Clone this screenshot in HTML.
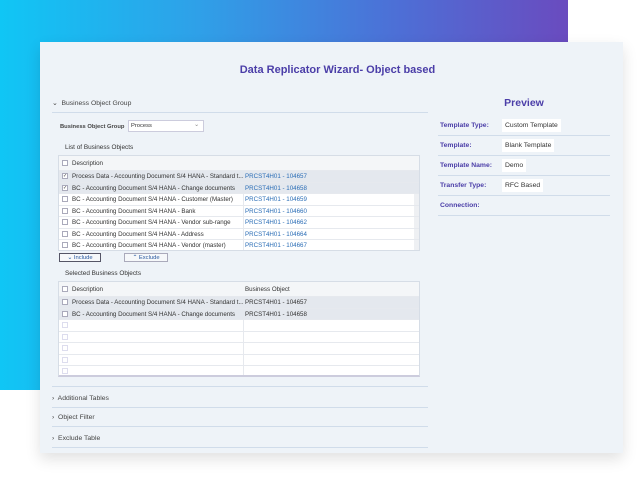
<!DOCTYPE html><html><head><style>
*{margin:0;padding:0;box-sizing:border-box}
body{width:637px;height:489px;background:#fff;position:relative;overflow:hidden;font-family:"Liberation Sans",sans-serif;font-size:6.2px;color:#333}
.bg{position:absolute;left:0;top:0;width:568px;height:390px;background:linear-gradient(90deg,#10c6f5 0%,#2fa0e8 35%,#4d6fd6 70%,#6a4bbf 100%)}
.card{position:absolute;left:40px;top:42px;width:583px;height:411px;background:#eef3f8;box-shadow:0 6px 14px rgba(0,0,0,.12)}
.a{position:absolute}
.title{left:6px;width:583px;text-align:center;top:22px;font-size:11px;font-weight:bold;color:#4b3ea8}
.sec{position:absolute;left:12px;width:376px;border-bottom:1px solid #d0dcea;font-size:6.8px;color:#444;height:14px}
.t{position:absolute;left:18px;width:362px;background:#fff;border:1px solid #d6dde6}
.r{height:11.5px;border-bottom:1px solid #e6e9ee;position:relative;white-space:nowrap}
.r.s{background:#e4e8ee}
.r span{position:absolute;top:2px}
.cb{position:absolute;left:3px;top:2px;width:6px;height:6px;border:1px solid #aab;background:#fff;font-size:5px;line-height:5px}
.c1{left:13px}.c2{left:186px}
.lk{color:#2a6db6}
.col{position:absolute;left:184px;top:0;bottom:0;border-left:1px solid #e6e9ee}
.pv{position:absolute;left:398px;width:172px;height:20px;border-bottom:1px solid #d0dcea}
.pv b{position:absolute;left:2px;top:6px;color:#4b3ea8;font-size:6.8px}
.pv i{position:absolute;left:64px;top:3px;font-style:normal;background:#fff;padding:3px 3px;font-size:6.8px;color:#333}
.btn{position:absolute;border:1px solid #aab;background:#f6f8fa;height:9px;font-size:5.8px;color:#2a5aa0;text-align:center;line-height:8px}
</style></head><body>
<div class="bg"></div>
<div class="card">
<div class="a title">Data Replicator Wizard- Object based</div>
<div class="sec" style="top:57px">⌄&nbsp; Business Object Group</div>
<div class="a" style="left:20px;top:82px;font-size:5.8px;font-weight:bold;color:#444">Business Object Group</div>
<div class="a" style="left:88px;top:78px;width:76px;height:12px;background:#fff;border:1px solid #ccd;font-size:5.8px;padding:2px">Process<span style="position:absolute;right:4px;top:1px;color:#888">⌄</span></div>
<div class="a" style="left:25px;top:102px;font-size:6.4px">List of Business Objects</div>
<div class="t" style="top:113px;height:96px;overflow:hidden">
<div class="col"></div>
<div class="a" style="right:0;top:0;width:5px;height:96px;background:#eef0f3"><div style="width:5px;height:6px;background:#999"></div></div>
<div class="r" style="height:15px;background:#f4f6f8"><div class="cb" style="top:4px"></div><span class="c1" style="top:4px">Description</span></div>
<div class="r s"><div class="cb">✓</div><span class="c1">Process Data - Accounting Document S/4 HANA - Standard t...</span><span class="c2 lk">PRCST4H01 - 104657</span></div>
<div class="r s"><div class="cb">✓</div><span class="c1">BC - Accounting Document S/4 HANA - Change documents</span><span class="c2 lk">PRCST4H01 - 104658</span></div>
<div class="r"><div class="cb"></div><span class="c1">BC - Accounting Document S/4 HANA - Customer (Master)</span><span class="c2 lk">PRCST4H01 - 104659</span></div>
<div class="r"><div class="cb"></div><span class="c1">BC - Accounting Document S/4 HANA - Bank</span><span class="c2 lk">PRCST4H01 - 104660</span></div>
<div class="r"><div class="cb"></div><span class="c1">BC - Accounting Document S/4 HANA - Vendor sub-range</span><span class="c2 lk">PRCST4H01 - 104662</span></div>
<div class="r"><div class="cb"></div><span class="c1">BC - Accounting Document S/4 HANA - Address</span><span class="c2 lk">PRCST4H01 - 104664</span></div>
<div class="r"><div class="cb"></div><span class="c1">BC - Accounting Document S/4 HANA - Vendor (master)</span><span class="c2 lk">PRCST4H01 - 104667</span></div>
</div>
<div class="btn" style="left:19px;top:211px;width:42px;border-color:#556">⌄ Include</div>
<div class="btn" style="left:84px;top:211px;width:44px">⌃ Exclude</div>
<div class="a" style="left:25px;top:228px;font-size:6.4px">Selected Business Objects</div>
<div class="t" style="top:239px;height:96px;overflow:hidden;border-bottom:2px solid #ccd">
<div class="col"></div>
<div class="r" style="height:15px;background:#f4f6f8"><div class="cb" style="top:4px"></div><span class="c1" style="top:4px">Description</span><span class="c2" style="top:4px">Business Object</span></div>
<div class="r s"><div class="cb"></div><span class="c1">Process Data - Accounting Document S/4 HANA - Standard t...</span><span class="c2">PRCST4H01 - 104657</span></div>
<div class="r s"><div class="cb"></div><span class="c1">BC - Accounting Document S/4 HANA - Change documents</span><span class="c2">PRCST4H01 - 104658</span></div>
<div class="r"><div class="cb" style="border-color:#dde"></div></div>
<div class="r"><div class="cb" style="border-color:#dde"></div></div>
<div class="r"><div class="cb" style="border-color:#dde"></div></div>
<div class="r"><div class="cb" style="border-color:#dde"></div></div>
<div class="r"><div class="cb" style="border-color:#dde"></div></div>
</div>
<div class="sec" style="top:339px;height:6px"></div>
<div class="sec" style="top:350px;height:16px;padding-top:3px">›&nbsp; Additional Tables</div>
<div class="sec" style="top:369px;height:16px;padding-top:3px">›&nbsp; Object Filter</div>
<div class="sec" style="top:390px;height:16px;padding-top:3px">›&nbsp; Exclude Table</div>
<div class="a" style="left:398px;top:55px;width:172px;text-align:center;font-size:10.5px;font-weight:bold;color:#4b3ea8">Preview</div>
<div class="pv" style="top:74px"><b>Template Type:</b><i>Custom Template</i></div>
<div class="pv" style="top:94px"><b>Template:</b><i>Blank Template</i></div>
<div class="pv" style="top:114px"><b>Template Name:</b><i>Demo</i></div>
<div class="pv" style="top:134px"><b>Transfer Type:</b><i>RFC Based</i></div>
<div class="pv" style="top:154px"><b>Connection:</b></div>
</div>
</body></html>
